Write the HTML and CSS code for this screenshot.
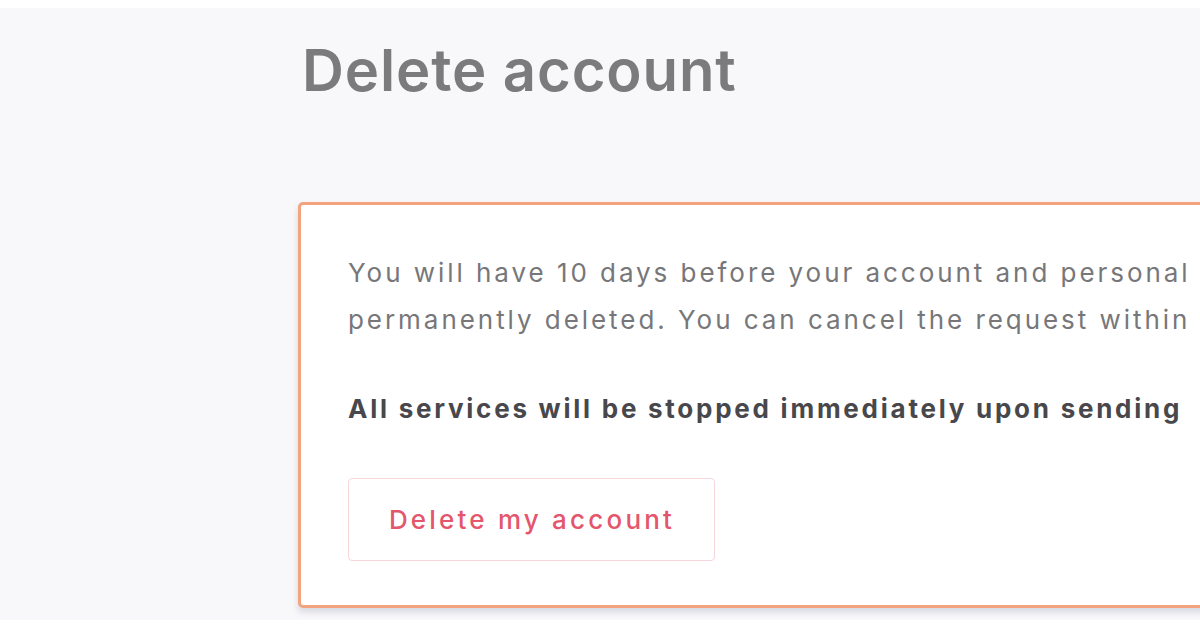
FILE: index.html
```html
<!DOCTYPE html>
<html>
<head>
<meta charset="utf-8">
<link rel="stylesheet" href="styles.css">
</head>
<body>
<div class="page">
  <main class="content">
    <h1 class="title">Delete account</h1>
    <section class="card">
      <p class="info">You will have 10 days before your account and personal<br>permanently deleted. You can cancel the request within</p>
      <p class="warn">All services will be stopped immediately upon sending</p>
      <button class="btn-delete">Delete my account</button>
    </section>
  </main>
</div>
</body>
</html>
```

FILE: styles.css
```css
html, body {
  margin: 0;
  padding: 0;
  background: #ffffff;
  overflow: hidden;
  width: 1200px;
  height: 628px;
}
.page {
  margin-top: 8px;
  height: 612px;
  background: #f8f8fa;
  font-family: Inter, "Noto Sans", sans-serif;
  overflow: hidden;
}
.content {
  padding-left: 298px;
  width: 1400px;
}
.title {
  margin: 0;
  padding: 30px 0 0 4px;
  font-size: 58px;
  font-weight: 600;
  color: #7b7b7d;
  line-height: 64px;
  letter-spacing: 0.9px;
}
.card {
  margin-top: 100px;
  background: #ffffff;
  border: 3px solid #f3a47f;
  border-radius: 5px;
  box-shadow: 0 4px 6px rgba(120, 120, 150, 0.25);
  padding: 44px 48px 44px 47px;
  box-sizing: border-box;
  height: 406px;
}
.info {
  margin: 0;
  font-size: 26px;
  line-height: 47px;
  color: #77777a;
  white-space: nowrap;
  letter-spacing: 2.95px;
}
.warn {
  margin: 50px 0 0 0;
  font-size: 26px;
  line-height: 32px;
  font-weight: 700;
  color: #48484c;
  white-space: nowrap;
  letter-spacing: 2.75px;
}
.btn-delete {
  margin-top: 53px;
  width: 367px;
  height: 83px;
  padding: 0 0 0 1px;
  background: #ffffff;
  border: 1.5px solid #f6d6da;
  border-radius: 4px;
  font-family: Inter, "Noto Sans", sans-serif;
  font-size: 26px;
  font-weight: 500;
  color: #e4566c;
  letter-spacing: 3.2px;
}
```
